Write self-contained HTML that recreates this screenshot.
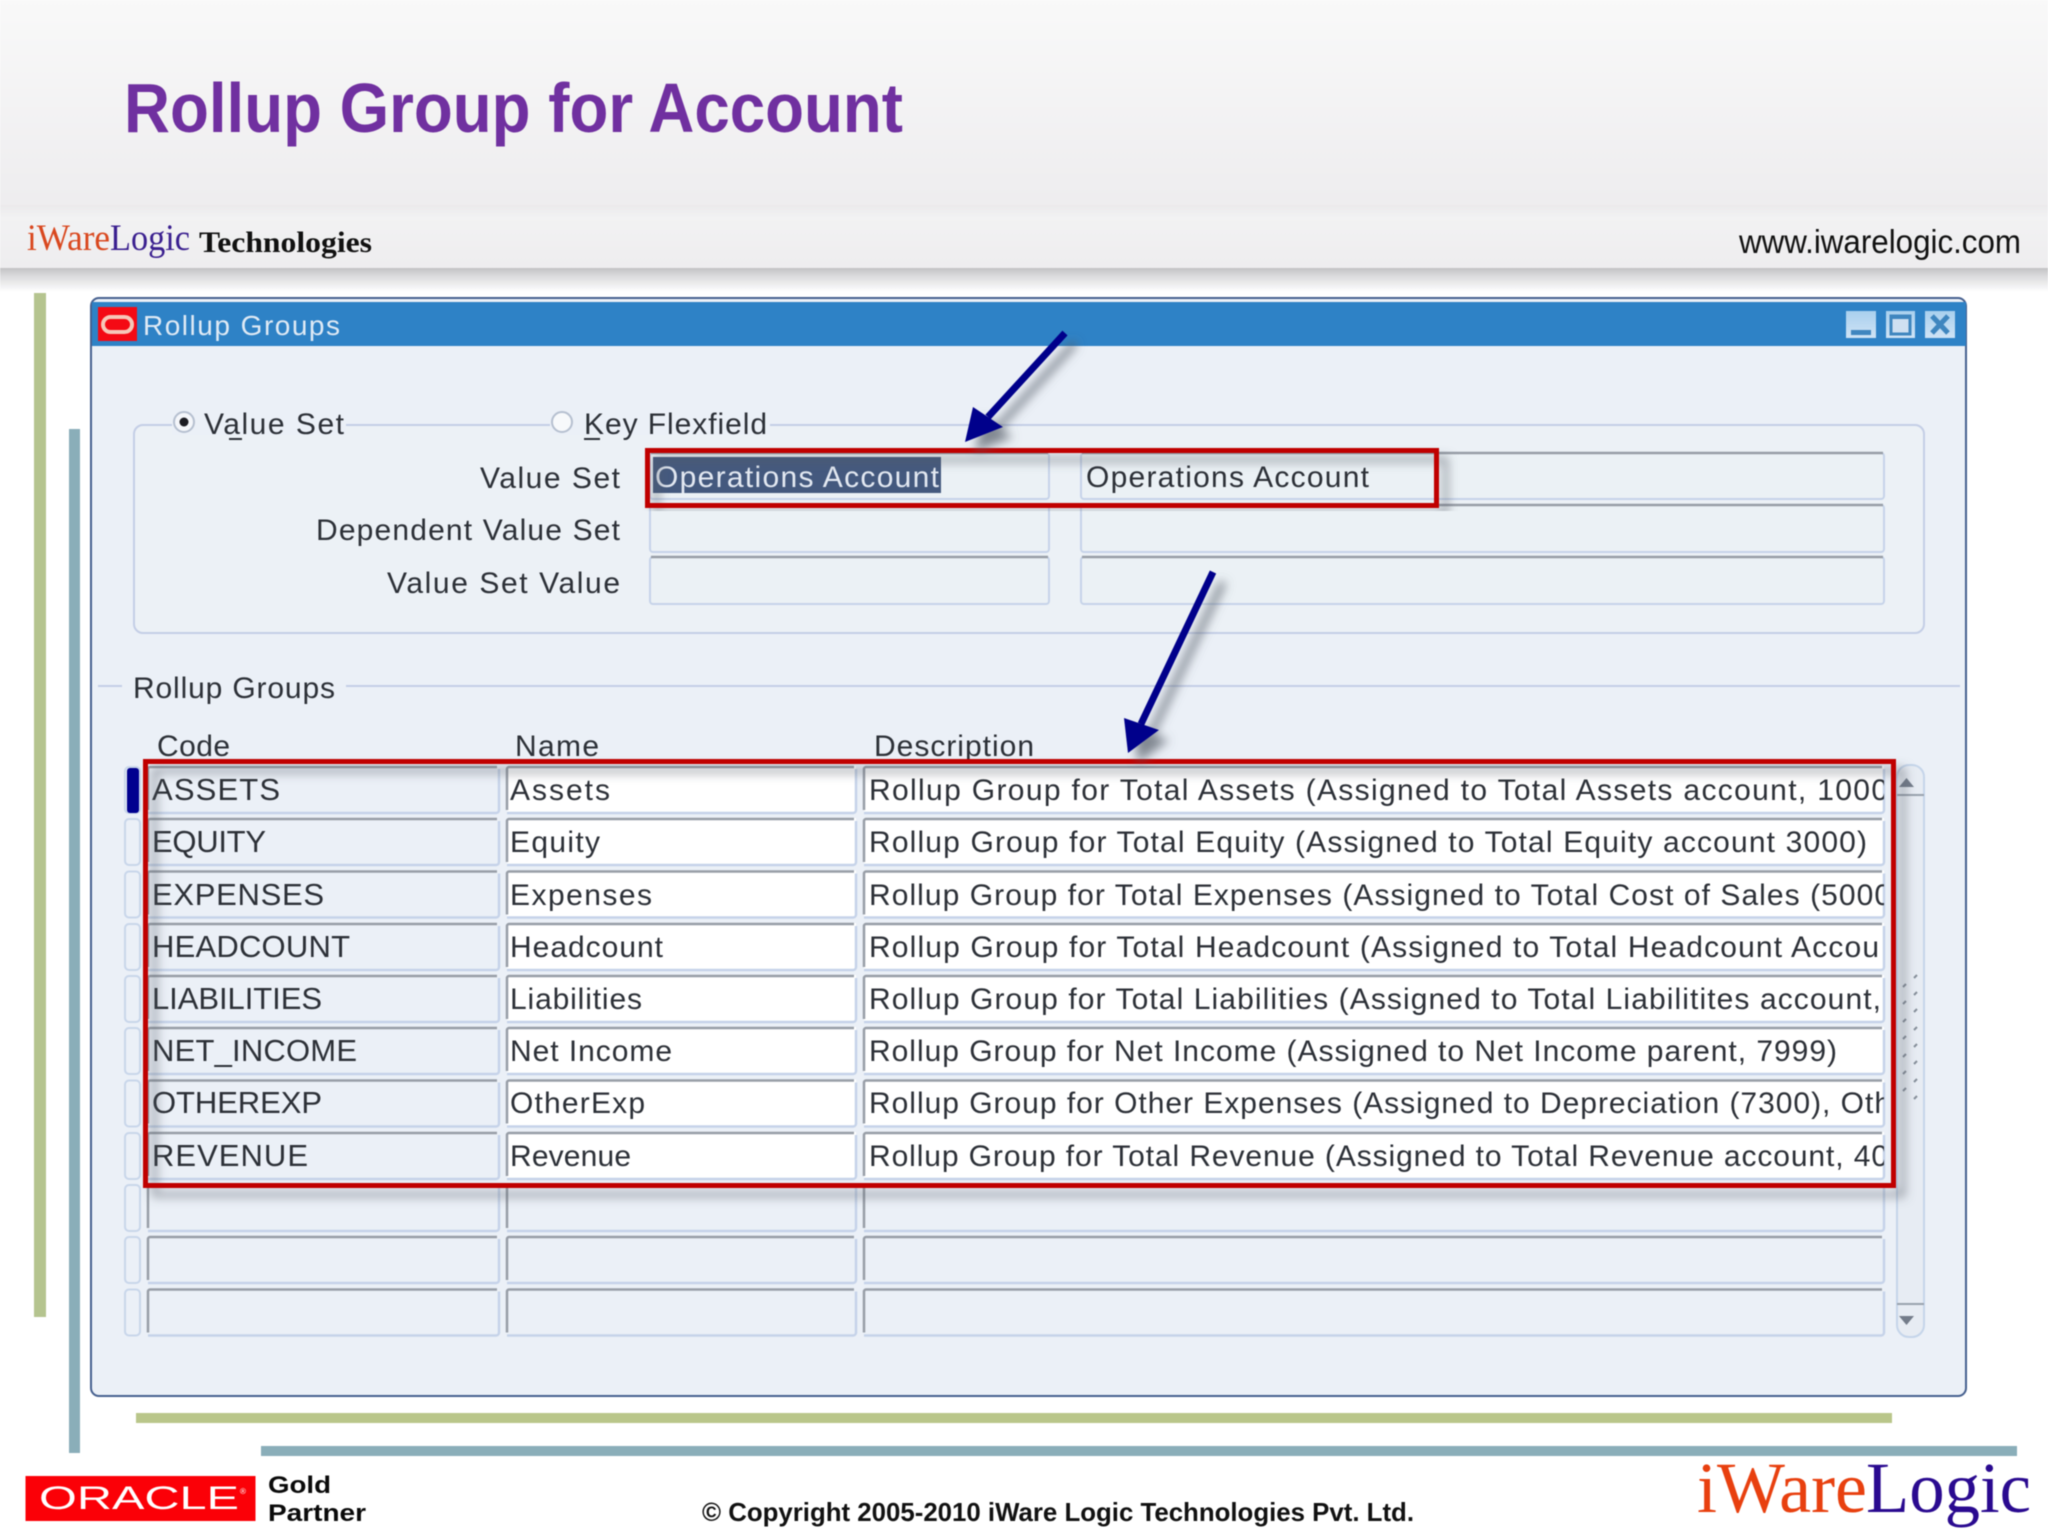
<!DOCTYPE html>
<html><head><meta charset="utf-8"><title>Rollup Group for Account</title>
<style>
html,body{margin:0;padding:0;background:#fff;width:2048px;height:1536px;overflow:hidden}
svg{display:block;filter:blur(.5px)}
text{font-family:"Liberation Sans",sans-serif;font-size:30px;fill:#2c3037}
.c{font-size:31px}
.s{font-family:"Liberation Serif",serif}
</style></head><body>
<svg xmlns="http://www.w3.org/2000/svg" width="2048" height="1536" viewBox="0 0 2048 1536">
<defs>
<linearGradient id="hd" x1="0" y1="0" x2="0" y2="1"><stop offset="0" stop-color="#f9f9f9"/><stop offset="1" stop-color="#eeedef"/></linearGradient>
<linearGradient id="bd" x1="0" y1="0" x2="0" y2="1"><stop offset="0" stop-color="#ebeaec"/><stop offset=".2" stop-color="#f2f2f3"/><stop offset="1" stop-color="#eeedef"/></linearGradient>
<linearGradient id="sh" x1="0" y1="0" x2="0" y2="1"><stop offset="0" stop-color="#c2c2c4"/><stop offset=".35" stop-color="#dcdcde"/><stop offset="1" stop-color="#ffffff"/></linearGradient>
<linearGradient id="btn" x1="0" y1="0" x2="0" y2="1"><stop offset="0" stop-color="#a9d0ee"/><stop offset="1" stop-color="#cfe3f5"/></linearGradient>
<filter id="ds" x="-10%" y="-10%" width="120%" height="120%"><feDropShadow dx="9" dy="9" stdDeviation="5" flood-color="#555b66" flood-opacity=".6"/></filter>
<filter id="dsa" x="-40%" y="-40%" width="180%" height="180%"><feDropShadow dx="10" dy="10" stdDeviation="5" flood-color="#555b66" flood-opacity=".7"/></filter>
<g id="row" fill="none">
<path d="M148 47H496a3 3 0 0 0 3-3V3" stroke="#c6d3e9" stroke-width="2.5"/><path d="M148 44V3a2 2 0 0 1 2-2H497" stroke="#989ea7" stroke-width="2.5"/>
<path d="M507 47H853a3 3 0 0 0 3-3V3" stroke="#c6d3e9" stroke-width="2.5"/><path d="M507 44V3a2 2 0 0 1 2-2H854" stroke="#989ea7" stroke-width="2.5"/>
<path d="M864 47H1881a3 3 0 0 0 3-3V3" stroke="#c6d3e9" stroke-width="2.5"/><path d="M864 44V3a2 2 0 0 1 2-2H1882" stroke="#989ea7" stroke-width="2.5"/>
<rect x="125" y="1" width="15" height="46" rx="4" stroke="#c8d6ea" stroke-width="2"/>
</g>
<clipPath id="dc"><rect x="866" y="760" width="1018" height="440"/></clipPath>
</defs>

<!-- header -->
<rect width="2048" height="205" fill="url(#hd)"/>
<rect y="205" width="2048" height="63" fill="url(#bd)"/>
<rect y="268" width="2048" height="24" fill="url(#sh)"/>
<text x="124" y="132" textLength="779" lengthAdjust="spacingAndGlyphs" style="font-size:70px;font-weight:bold;fill:#7030a0">Rollup Group for Account</text>
<text class="s" x="27" y="250" textLength="83" lengthAdjust="spacingAndGlyphs" style="font-size:37px;fill:#d9481f">iWare</text>
<text class="s" x="110" y="250" textLength="80" lengthAdjust="spacingAndGlyphs" style="font-size:37px;fill:#3a1f8f">Logic</text>
<text class="s" x="199" y="252" textLength="173" lengthAdjust="spacingAndGlyphs" style="font-size:30px;font-weight:bold;fill:#111">Technologies</text>
<text x="1739" y="253" textLength="282" lengthAdjust="spacingAndGlyphs" style="font-size:33px;fill:#111">www.iwarelogic.com</text>

<!-- side bars -->
<rect x="34" y="293" width="12" height="1024" fill="#b5c48f"/>
<rect x="69" y="429" width="11" height="1024" fill="#8aaeb9"/>
<rect x="136" y="1413" width="1756" height="10" fill="#b9c68a"/>
<rect x="261" y="1446" width="1756" height="10" fill="#8aaeb9"/>

<!-- window -->
<rect x="91" y="298" width="1875" height="1098" rx="8" fill="#ebf0f7" stroke="#46608f" stroke-width="2"/>
<rect x="92" y="302" width="1874" height="44" fill="#2e82c6"/>
<rect x="98" y="307" width="39" height="34" fill="#f40a14"/>
<rect x="103" y="317" width="29" height="15" rx="7.5" fill="none" stroke="#f6c8b8" stroke-width="4"/>
<text x="143" y="335" textLength="197" style="font-size:28px;fill:#dfeaf5">Rollup Groups</text>
<rect x="1846" y="311" width="30" height="27" fill="url(#btn)"/><rect x="1851" y="330" width="20" height="5" fill="#3f86bf"/>
<rect x="1886" y="311" width="29" height="27" fill="url(#btn)"/><rect x="1891" y="316" width="19" height="18" fill="#cfe0f1" stroke="#3f86bf" stroke-width="3"/><rect x="1891" y="315" width="19" height="4" fill="#3f86bf"/>
<rect x="1925" y="311" width="30" height="27" fill="url(#btn)"/><path d="M1932 316L1948 333M1948 316L1932 333" stroke="#3f86bf" stroke-width="5"/>

<!-- radio frame -->
<rect x="134" y="425" width="1790" height="208" rx="9" fill="#ecf1f6" stroke="#c4cee6" stroke-width="2"/>
<rect x="172" y="415" width="174" height="20" fill="#ebf0f7"/><rect x="550" y="415" width="220" height="20" fill="#ebf0f7"/>
<circle cx="184" cy="422" r="10" fill="#f4f6fa" stroke="#b6c0d0" stroke-width="2"/><circle cx="184" cy="422" r="4.5" fill="#1c1c22"/>
<text x="204" y="434" textLength="140">Value Set</text><rect x="229" y="438" width="13" height="2" fill="#2c3037"/>
<circle cx="562" cy="422" r="10" fill="#f7f9fb" stroke="#b6c0d0" stroke-width="2"/>
<text x="584" y="434" textLength="183">Key Flexfield</text><rect x="584" y="438" width="16" height="2" fill="#2c3037"/>
<text x="480" y="488" textLength="140">Value Set</text>
<text x="316" y="540" textLength="304">Dependent Value Set</text>
<text x="387" y="593" textLength="233">Value Set Value</text>
<g fill="#ebf1f5" stroke="#c6d3e9" stroke-width="2">
<rect x="650" y="453" width="399" height="46" rx="3"/><rect x="1081" y="453" width="803" height="46" rx="3"/>
<rect x="650" y="505" width="399" height="47" rx="3"/><rect x="1081" y="505" width="803" height="47" rx="3"/>
<rect x="650" y="557" width="399" height="47" rx="3"/><rect x="1081" y="557" width="803" height="47" rx="3"/>
</g>
<g stroke="#989ea7" stroke-width="2.5"><path d="M651 453H1048M1082 453H1883M651 505H1048M1082 505H1883M651 557H1048M1082 557H1883"/></g>
<rect x="653" y="457" width="288" height="36" fill="#44597e"/>
<text x="655" y="487" textLength="284" style="fill:#e3e9f2">Operations Account</text>
<text x="1086" y="487" textLength="283">Operations Account</text>

<!-- rollup section -->
<rect x="98" y="685" width="24" height="2" fill="#c4cee6"/><rect x="346" y="685" width="1614" height="2" fill="#c4cee6"/>
<text x="133" y="698" textLength="202">Rollup Groups</text>
<text x="157" y="756" textLength="73">Code</text>
<text x="515" y="756" textLength="84">Name</text>
<text x="874" y="756" textLength="160">Description</text>

<!-- scrollbar -->
<rect x="1897" y="765" width="27" height="572" rx="12" fill="#e7ecf3" stroke="#c5d5ea" stroke-width="2"/>
<path d="M1897 795H1924M1897 1304H1924" stroke="#99a2ad" stroke-width="2"/>
<path d="M1899 787L1906.5 778L1914 787Z M1899 1316H1914L1906.5 1325Z" fill="#737c8a"/>
<g stroke="#868f9a" stroke-width="2">
<path d="M1903 987l3-3M1903 1004l3-3M1903 1022l3-3M1903 1039l3-3M1903 1057l3-3M1903 1074l3-3M1903 1091l3-3M1914 978l3-3M1914 995l3-3M1914 1012l3-3M1914 1030l3-3M1914 1047l3-3M1914 1064l3-3M1914 1082l3-3M1914 1099l3-3"/>
</g>

<!-- table fills -->
<g fill="#ffffff">
<rect x="507" y="766" width="349" height="47"/><rect x="864" y="766" width="1020" height="47"/>
<rect x="507" y="818" width="349" height="47"/><rect x="864" y="818" width="1020" height="47"/>
<rect x="507" y="870.5" width="349" height="47"/><rect x="864" y="870.5" width="1020" height="47"/>
<rect x="507" y="923" width="349" height="47"/><rect x="864" y="923" width="1020" height="47"/>
<rect x="507" y="975" width="349" height="47"/><rect x="864" y="975" width="1020" height="47"/>
<rect x="507" y="1027" width="349" height="47"/><rect x="864" y="1027" width="1020" height="47"/>
<rect x="507" y="1079.5" width="349" height="47"/><rect x="864" y="1079.5" width="1020" height="47"/>
<rect x="507" y="1132" width="349" height="47"/><rect x="864" y="1132" width="1020" height="47"/>
</g>
<use href="#row" y="766"/><use href="#row" y="818"/><use href="#row" y="870.5"/><use href="#row" y="923"/><use href="#row" y="975"/><use href="#row" y="1027"/><use href="#row" y="1079.5"/><use href="#row" y="1132"/><use href="#row" y="1184"/><use href="#row" y="1236"/><use href="#row" y="1288.5"/>
<rect x="127" y="768" width="12" height="45" rx="3" fill="#00008f"/>

<!-- codes -->
<text class="c" x="152" y="800" textLength="128">ASSETS</text>
<text class="c" x="152" y="852" textLength="114">EQUITY</text>
<text class="c" x="152" y="905" textLength="172">EXPENSES</text>
<text class="c" x="152" y="957" textLength="198">HEADCOUNT</text>
<text class="c" x="152" y="1009" textLength="170">LIABILITIES</text>
<text class="c" x="152" y="1061" textLength="205">NET_INCOME</text>
<text class="c" x="152" y="1113" textLength="170">OTHEREXP</text>
<text class="c" x="152" y="1166" textLength="156">REVENUE</text>
<!-- names -->
<text x="510" y="800" textLength="100">Assets</text>
<text x="510" y="852" textLength="90">Equity</text>
<text x="510" y="905" textLength="142">Expenses</text>
<text x="510" y="957" textLength="153">Headcount</text>
<text x="510" y="1009" textLength="132">Liabilities</text>
<text x="510" y="1061" textLength="162">Net Income</text>
<text x="510" y="1113" textLength="135">OtherExp</text>
<text x="510" y="1166" textLength="121">Revenue</text>
<!-- descriptions -->
<g clip-path="url(#dc)">
<text x="869" y="800" textLength="1019">Rollup Group for Total Assets (Assigned to Total Assets account, 1000</text>
<text x="869" y="852" textLength="998">Rollup Group for Total Equity (Assigned to Total Equity account 3000)</text>
<text x="869" y="905" textLength="1022">Rollup Group for Total Expenses (Assigned to Total Cost of Sales (5000</text>
<text x="869" y="957" textLength="1010">Rollup Group for Total Headcount (Assigned to Total Headcount Accou</text>
<text x="869" y="1009" textLength="1012">Rollup Group for Total Liabilities (Assigned to Total Liabilitites account,</text>
<text x="869" y="1061" textLength="968">Rollup Group for Net Income (Assigned to Net Income parent, 7999)</text>
<text x="869" y="1113" textLength="1022">Rollup Group for Other Expenses (Assigned to Depreciation (7300), Oth</text>
<text x="869" y="1166" textLength="1019">Rollup Group for Total Revenue (Assigned to Total Revenue account, 40</text>
</g>

<!-- annotations -->
<rect x="647.5" y="450.5" width="789" height="55" fill="none" stroke="#c00000" stroke-width="5" filter="url(#ds)"/>
<rect x="145.5" y="761.5" width="1748" height="424" fill="none" stroke="#c00000" stroke-width="5" filter="url(#ds)"/>
<g filter="url(#dsa)"><path d="M1065 333L988 417" stroke="#00008b" stroke-width="7" fill="none"/><path d="M965 442L973 407L1003 427Z" fill="#00008b"/></g>
<g filter="url(#dsa)"><path d="M1213 572L1141 724" stroke="#00008b" stroke-width="7" fill="none"/><path d="M1128 753L1124 718L1159 730Z" fill="#00008b"/></g>

<!-- footer -->
<rect x="25.5" y="1476" width="230" height="45" fill="#fb0007"/>
<text x="39" y="1509" textLength="200" lengthAdjust="spacingAndGlyphs" style="font-size:32px;fill:#fff">ORACLE</text>
<text x="240" y="1494" style="font-size:8px;fill:#fff">®</text>
<text x="268" y="1493" textLength="63" lengthAdjust="spacingAndGlyphs" style="font-size:24px;font-weight:bold;fill:#0a0a0a">Gold</text>
<text x="268" y="1521" textLength="98" lengthAdjust="spacingAndGlyphs" style="font-size:24px;font-weight:bold;fill:#0a0a0a">Partner</text>
<text x="702" y="1521" textLength="712" lengthAdjust="spacingAndGlyphs" style="font-size:26px;font-weight:bold;fill:#111">© Copyright 2005-2010 iWare Logic Technologies Pvt. Ltd.</text>
<text class="s" x="1697" y="1512" textLength="170" lengthAdjust="spacingAndGlyphs" style="font-size:72px;fill:#e8400f">iWare</text>
<text class="s" x="1866" y="1512" textLength="165" lengthAdjust="spacingAndGlyphs" style="font-size:72px;fill:#2a0a90">Logic</text>
</svg>
</body></html>
